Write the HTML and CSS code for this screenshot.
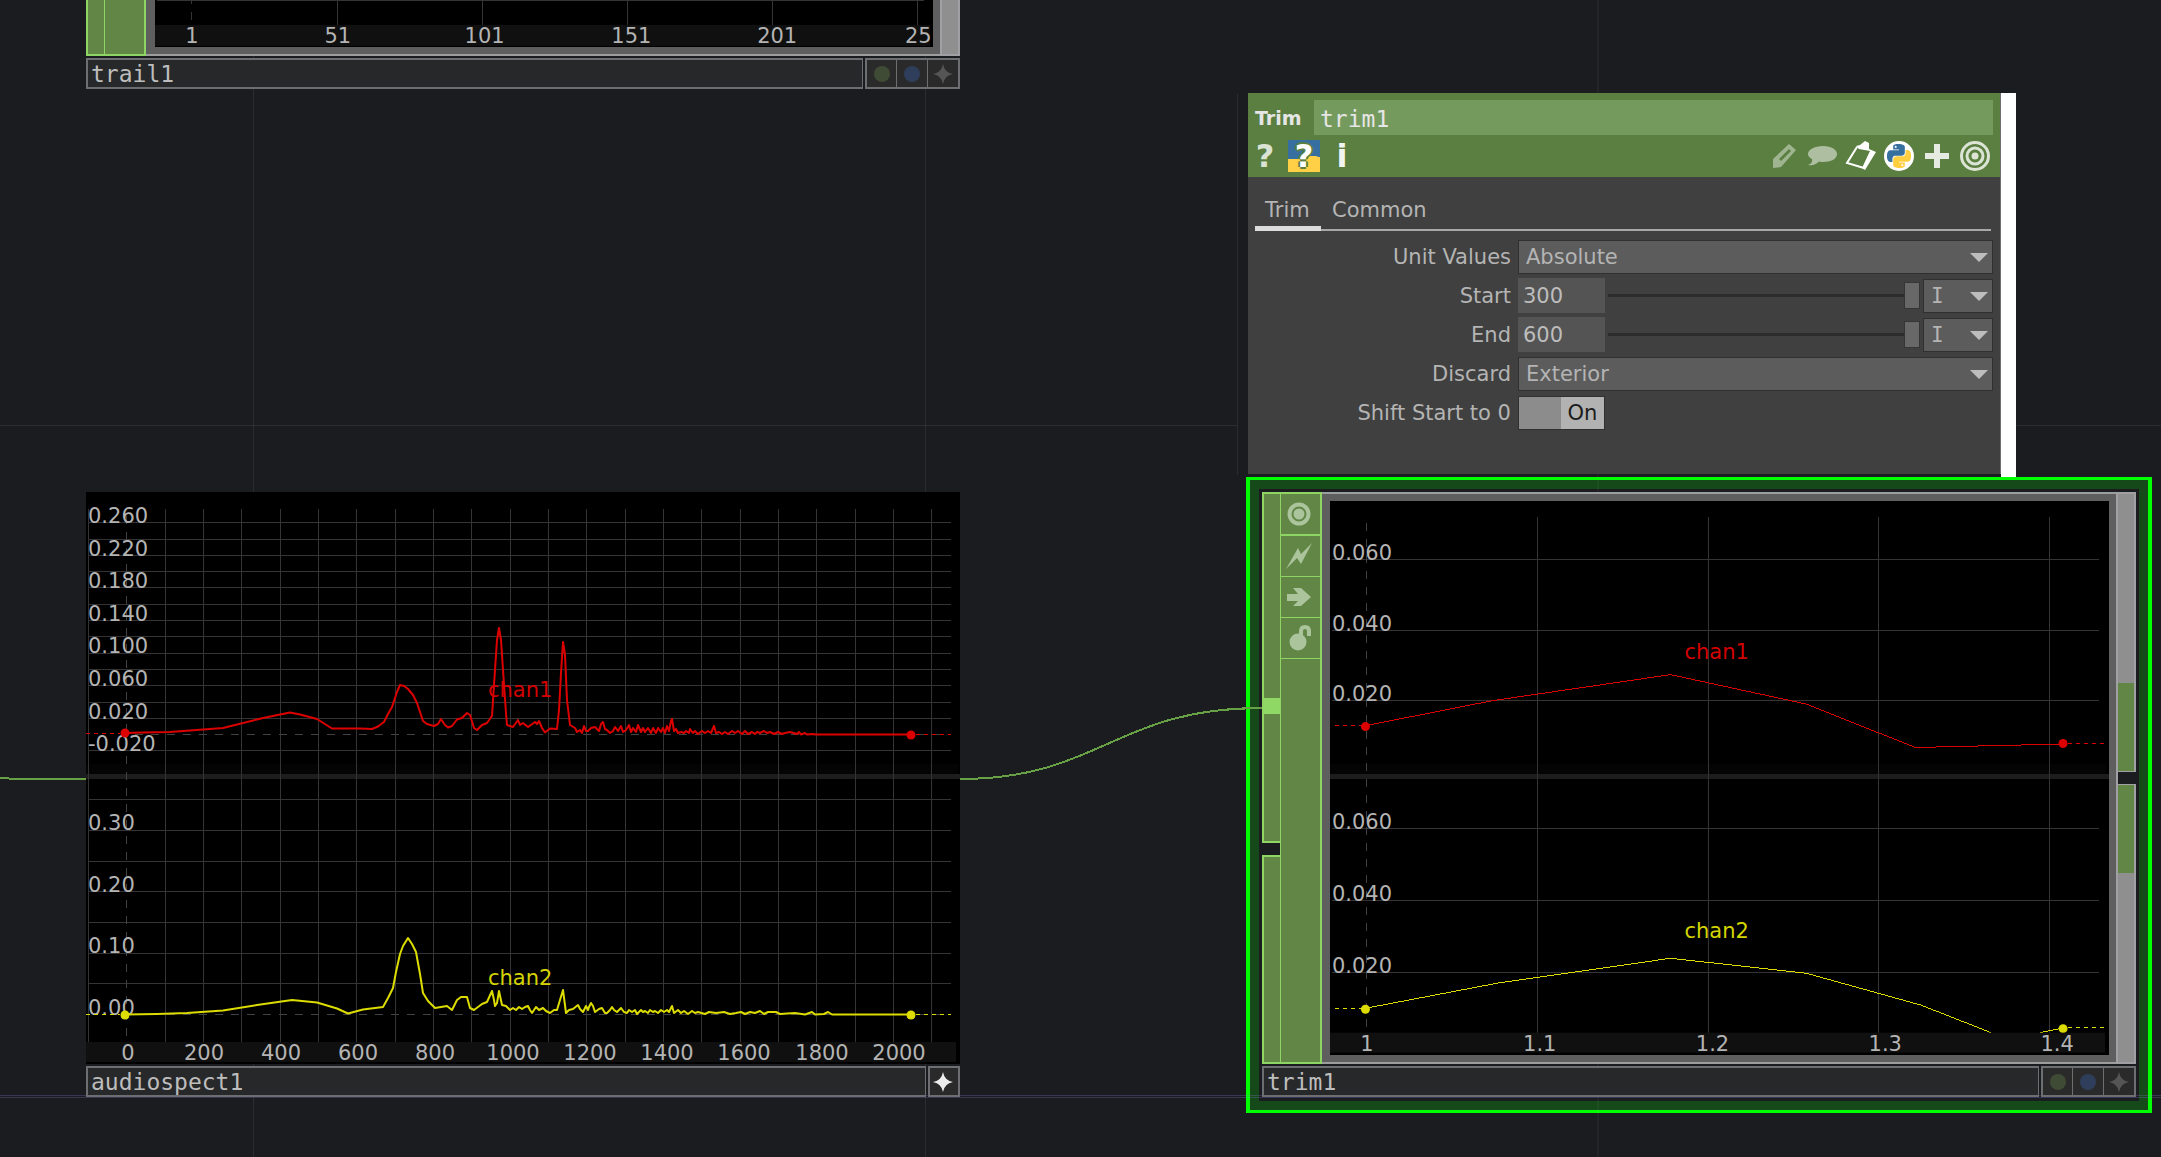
FILE: index.html
```html
<!DOCTYPE html>
<html lang="en">
<head>
<meta charset="utf-8">
<title>Network Editor</title>
<link rel="stylesheet" href="styles.css">
</head>
<body>
<svg class="defs" aria-hidden="true">
  <defs>
    <symbol id="star" viewBox="0 0 20 20"><path d="M10 0Q11.500 8.500 20 10Q11.500 11.500 10 20Q8.500 11.500 0 10Q8.500 8.500 10 0z"/></symbol>
    <symbol id="snake" viewBox="0 0 24 24"><path d="M14.25.18l.9.2.73.26.59.3.45.32.34.34.25.34.16.33.1.3.04.26.02.2-.01.13V8.500l-.05.63-.13.55-.21.46-.26.38-.3.31-.33.25-.35.19-.35.14-.33.1-.3.07-.26.04-.21.02H8.770l-.69.05-.59.14-.5.22-.41.27-.33.32-.27.35-.2.36-.15.37-.1.35-.07.32-.04.27-.02.21v3.060H3.170l-.21-.03-.28-.07-.32-.12-.35-.18-.36-.26-.36-.36-.35-.46-.32-.59-.28-.73-.21-.88-.14-1.050-.05-1.230.06-1.220.16-1.040.24-.87.32-.71.36-.57.4-.44.42-.33.42-.24.4-.16.36-.1.32-.05.24-.01h.16l.06.01h8.160v-.83H6.180l-.01-2.750-.02-.37.05-.34.11-.31.17-.28.25-.26.31-.23.38-.2.44-.18.51-.15.58-.12.64-.1.71-.06.77-.04.84-.02 1.270.05zm-6.300 1.980l-.23.33-.08.41.08.41.23.34.33.22.41.09.41-.09.33-.22.23-.34.08-.41-.08-.41-.23-.33-.33-.22-.41-.09-.41.09z"/></symbol>
  </defs>
</svg>

<main class="network">
  <div class="selection"></div>

  <svg class="wires" width="2161" height="1157" viewBox="0 0 2161 1157" aria-hidden="true">
    <g class="lattice">
      <path d="M253.500 0V1157M925.500 0V1157M1598 0V1157M1237.500 94V475M0 425.500H1237M2016 425.500H2161"/>
      <path class="axis" d="M0 1095.500H2161M0 1097.500H2161"/>
    </g>
    <path class="wire" d="M0 778Q20 779.500 60 779H86"/>
    <path class="wire" d="M960 779C1100 779 1115 708 1262 708"/>
  </svg>

  <section class="node node-trail" aria-label="trail1">
    <div class="tile framed">
      <div class="inputs"><span class="slot"></span></div>
      <div class="switches"></div>
      <svg class="chart" viewBox="154 0 779 47">
        <rect class="strip" x="154" y="25" width="776" height="21"/>
        <path class="grid" d="M156 .5H924M336.500 0V25M481.500 0V25M627.500 0V25M772.500 0V25M917.500 0V25"/>
        <path class="grid" d="M190.500 0V4M190.500 12V20"/>
        <g class="mid"><text x="191" y="43">1</text><text x="337" y="43">51</text><text x="484" y="43">101</text><text x="631" y="43">151</text><text x="777" y="43">201</text></g>
        <text x="905" y="43">25</text>
      </svg>
      <div class="outputs"><span class="out"></span></div>
    </div>
    <div class="footer">
      <div class="name">trail1</div>
      <div class="flags">
        <button class="flag" aria-label="Display"><i class="dot render"></i></button>
        <button class="flag" aria-label="Render"><i class="dot display"></i></button>
        <button class="flag" aria-label="Viewer active"><svg class="spark"><use href="#star"/></svg></button>
      </div>
    </div>
  </section>

  <section class="node node-spect" aria-label="audiospect1">
    <div class="tile">
      <svg class="chart" viewBox="86 492 874 572">
        <rect class="shade" x="86" y="764" width="872" height="10"/>
        <rect class="divider" x="86" y="774" width="874" height="5"/>
        <rect class="strip" x="86" y="1042" width="870" height="20"/>
        <path class="grid" d="M88.500 509V1042M165.500 509V1042M203.500 509V1042M241.500 509V1042M280.500 509V1042M318.500 509V1042M356.500 509V1042M395.500 509V1042M433.500 509V1042M471.500 509V1042M510.500 509V1042M548.500 509V1042M586.500 509V1042M625.500 509V1042M663.500 509V1042M701.500 509V1042M740.500 509V1042M778.500 509V1042M816.500 509V1042M855.500 509V1042M893.500 509V1042M931.500 509V1042"/>
        <path class="grid" d="M88 522.500H951M88 539.500H951M88 555.500H951M88 571.500H951M88 587.500H951M88 604.500H951M88 620.500H951M88 636.500H951M88 653.500H951M88 669.500H951M88 685.500H951M88 702.500H951M88 718.500H951M88 750.500H951M88 799.500H951M88 830.500H951M88 861.500H951M88 891.500H951M88 922.500H951M88 953.500H951M88 983.500H951"/>
        <path class="grid dashed" d="M126.500 516V1036M135 734.500H951M135 1014.500H951"/>
        <text x="88" y="523">0.260</text><text x="88" y="556">0.220</text><text x="88" y="588">0.180</text><text x="88" y="621">0.140</text><text x="88" y="653">0.100</text><text x="88" y="686">0.060</text><text x="88" y="719">0.020</text><text x="88" y="751">-0.020</text>
        <text x="88" y="830">0.30</text><text x="88" y="892">0.20</text><text x="88" y="953">0.10</text><text x="88" y="1015">0.00</text>
        <g class="mid"><text x="128" y="1060">0</text><text x="204" y="1060">200</text><text x="281" y="1060">400</text><text x="358" y="1060">600</text><text x="435" y="1060">800</text><text x="513" y="1060">1000</text><text x="590" y="1060">1200</text><text x="667" y="1060">1400</text><text x="744" y="1060">1600</text><text x="822" y="1060">1800</text><text x="899" y="1060">2000</text></g>
        <g class="red">
          <polyline class="line thick" points="125,733 143,732.500 170,732 223,728 263,718 290,712.500 300,714.500 317,719 332,728.500 360,728.500 372,729 378,726.500 384,722 388,714 392,707 397,692 400,685 404,686 408,689 413,695 417,703 423,721 427,724 434,726 438,724 441,719 445,725 448,727.500 452,726 457,719.500 462,718 467,713 470,715 474,728 477,730 482,725 487,723 492,716 495,670 497,640 499,628 501,640 503,670 506,713 507,725 513,727 518,720 520,725 523,723 528,727 535,722 537,724 539,721 542,728 545,732.500 550,728.500 557,729 559,710 561,673 563,642 565,655 567,700 570,725 575,728 577,732 580,730 582,733 584,726 586,731 588,731 591,728 595,727 599,731 601,724 603,722 605,729 607,730 610,733 613,731 615,727 618,731 621,726 623,732 626,730 629,725 631,732 633,728 636,732 638,725 641,732 643,728 645,732 648,728 651,733 653,728 656,733 658,728 661,732 663,728 665,733 667,726 669,731 671,721 672,719 674,731 676,729 678,733 681,732 684,733 686,731 689,733 690,729 693,733 695,731 698,734 702,731 705,733 708,731 711,733 714,726 716,733 719,732 722,734 725,732 728,734 732,731 735,733 738,731 742,734 745,731 748,734 752,732 755,734 757,732 760,733 764,731 767,733 770,732 774,734 778,732 782,734 785,733 790,732 797,734 799,732 801,734.500 805,733 807,734.500 812,734 816,734.500 911,734.500"/>
          <path class="line dash" d="M86 733.500H120M916 734.500H951"/>
          <circle cx="125" cy="733" r="4.500"/><circle cx="911" cy="735" r="4.500"/>
          <text x="488" y="697">chan1</text>
        </g>
        <g class="yellow">
          <polyline class="line thick" points="125,1014.500 157,1014 187,1013 223,1010.500 257,1005 292,1000 317,1002.500 337,1008.500 348,1013.500 363,1009.500 383,1007 388,998 393,988 396,972 400,954 403,946 408,938 412,944 416,952 420,974 423,993 428,1001 435,1008 441,1007 447,1006 452,1010 457,1000 461,997 467,997 470,1008 474,1010 482,1004 487,1002 492,991 494,1000 495,1006 497,1003 499,991 502,1005 506,1006 510,1010 513,1008 516,1010 519,1007 522,1009 525,1007 528,1006 530,1010 532,1013 536,1007 539,1010 543,1008 546,1011 550,1013 554,1010 557,1010 560,1000 563,990 566,1013 569,1010 573,1009 578,1005 580,1009 583,1012 586,1006 588,1010 589,1007 591,1003 593,1006 595,1012 599,1009 602,1008 605,1013 607,1013 610,1010 612,1007 614,1010 617,1012 621,1008 624,1012 627,1013 629,1010 632,1012 635,1010 637,1014 641,1010 643,1012 645,1011 648,1013 650,1010 653,1012 655,1011 658,1013 661,1010 664,1012 667,1010 669,1012 672,1006 674,1013 678,1010 681,1013 684,1011 688,1014 692,1011 695,1013 698,1012 705,1014 709,1012 716,1013 724,1012 730,1014 736,1013 741,1012 745,1014 750,1012 755,1013 760,1011 764,1014 768,1012 776,1012 780,1014 795,1013 805,1014.500 812,1012 815,1014.500 824,1014 828,1012 832,1014.500 911,1014.500"/>
          <path class="line dash" d="M86 1014.500H120M916 1014.500H951"/>
          <circle cx="125" cy="1015" r="4.500"/><circle cx="911" cy="1015" r="4.500"/>
          <text x="488" y="985">chan2</text>
        </g>
      </svg>
    </div>
    <div class="footer">
      <div class="name">audiospect1</div>
      <div class="flags">
        <button class="flag on" aria-label="Viewer active"><svg class="spark"><use href="#star"/></svg></button>
      </div>
    </div>
  </section>

  <section class="node node-trim" aria-label="trim1">
    <div class="tile framed">
      <div class="inputs"><span class="slot first"><b class="plug"></b></span><span class="slot"></span></div>
      <div class="switches">
        <button class="switch" aria-label="Viewer"><svg viewBox="0 0 26 26"><circle cx="13" cy="13" r="9.500" fill="none" stroke-width="4"/><circle cx="13" cy="13" r="5.500" stroke="none"/></svg></button>
        <button class="switch" aria-label="Cook"><svg viewBox="0 0 26 26"><path stroke="none" d="M0 26L12 5L15 11L26 0L15 21L11 15z"/></svg></button>
        <button class="switch" aria-label="Bypass"><svg viewBox="0 0 26 26"><path stroke="none" d="M1 10H12L7 4H15L25 13L15 22H7L12 17H1z"/></svg></button>
        <button class="switch" aria-label="Lock"><svg viewBox="0 0 26 26"><circle cx="12" cy="17" r="8.500" stroke="none"/><path fill="none" stroke-width="4" d="M15 10V6Q15 2 19 2Q23 2 23 6V11"/></svg></button>
      </div>
      <svg class="chart" viewBox="1330 501 780 554">
        <rect class="shade" x="1330" y="764" width="777" height="10"/>
        <rect class="divider" x="1330" y="774" width="780" height="5"/>
        <path class="grid" d="M1537.500 517V1033M1708.500 517V1033M1879.500 517V1033M2050.500 517V1033M1332 559.500H2100M1332 630.500H2100M1332 700.500H2100M1332 828.500H2100M1332 900.500H2100M1332 972.500H2100"/>
        <path class="grid dashed" d="M1366.500 523V1028"/>
        <text x="1332" y="560">0.060</text><text x="1332" y="631">0.040</text><text x="1332" y="701">0.020</text>
        <text x="1332" y="829">0.060</text><text x="1332" y="901">0.040</text><text x="1332" y="973">0.020</text>
        <g class="red">
          <polyline class="line" points="1366,725.500 1493,700.500 1671,674.500 1807,704 1915,747 1935,747 2063,744"/>
          <path class="line dash" d="M1335 725.500H1362M2069 743.500H2105"/>
          <circle cx="1365.500" cy="726.500" r="4.500"/><circle cx="2064" cy="743.500" r="4.500"/>
          <text x="1685" y="659">chan1</text>
        </g>
        <g class="yellow">
          <polyline class="line" points="1366,1008.500 1497,983.500 1671,958.500 1807,973.500 1922,1005.500 1992,1033"/>
          <path class="line" d="M2041 1033L2063 1028.500"/>
          <path class="line dash" d="M1335 1008.500H1362M2069 1027.500H2105"/>
          <circle cx="1365.500" cy="1009.500" r="4.500"/><circle cx="2064" cy="1029" r="4.500"/>
          <text x="1685" y="938">chan2</text>
        </g>
        <rect class="strip" x="1330" y="1033" width="776" height="20"/>
        <g class="mid"><text x="1367" y="1051">1</text><text x="1540" y="1051">1.1</text><text x="1713" y="1051">1.2</text><text x="1886" y="1051">1.3</text><text x="2058" y="1051">1.4</text></g>
      </svg>
      <div class="outputs"><span class="out upper"></span><span class="out lower"></span></div>
    </div>
    <div class="footer">
      <div class="name">trim1</div>
      <div class="flags">
        <button class="flag" aria-label="Display"><i class="dot render"></i></button>
        <button class="flag" aria-label="Render"><i class="dot display"></i></button>
        <button class="flag" aria-label="Viewer active"><svg class="spark"><use href="#star"/></svg></button>
      </div>
    </div>
  </section>

  <form class="params">
    <div class="sheet">
      <header class="head">
        <div class="title">
          <label for="opname">Trim</label>
          <input id="opname" class="opname" type="text" value="trim1">
        </div>
        <div class="tools">
          <button type="button" class="tool glyph faded">?</button>
          <button type="button" class="tool glyph pyhelp">?</button>
          <button type="button" class="tool glyph">i</button>
          <span class="spring"></span>
          <button type="button" class="tool" aria-label="Edit"><svg viewBox="0 0 32 32" opacity=".42"><path fill="#fff" fill-rule="evenodd" d="M4 28V19L20 4L27 10L12 27z M10 19L12 21L22 11L20 9z"/></svg></button>
          <button type="button" class="tool" aria-label="Comment"><svg viewBox="0 0 32 32" opacity=".5"><path fill="#fff" d="M16 6C25 6 30 10 30 14C30 19 24 22 16 22Q14 22 12 21.500Q8 26 1 25Q6 23 5 19Q1 17 1 14C1 10 7 6 16 6z"/></svg></button>
          <button type="button" class="tool" aria-label="Copy parameters"><svg viewBox="0 0 32 32"><path fill="none" stroke="#fff" stroke-width="2" d="M12 7L2 23L19 28L26 12"/><path fill="#fff" d="M11 6L15 5L20 1L24 3L24 9L31 12L20 30L17 28L25 11L14 9z"/></svg></button>
          <button type="button" class="tool" aria-label="Python"><svg viewBox="0 0 32 32"><circle cx="16" cy="16" r="15" fill="#fff"/><use href="#snake" x="4" y="4" width="24" height="24" fill="#376f9f"/><use href="#snake" x="4" y="4" width="24" height="24" fill="#ffcf40" transform="rotate(180 16 16)"/></svg></button>
          <button type="button" class="tool" aria-label="Add"><svg viewBox="0 0 32 32"><path fill="#e6ebe2" d="M13 4H19V13H28V19H19V28H13V19H4V13H13z"/></svg></button>
          <button type="button" class="tool" aria-label="Target"><svg viewBox="0 0 32 32" stroke="#dce4d6" stroke-width="3" fill="none"><circle cx="16" cy="16" r="13.500"/><circle cx="16" cy="16" r="8"/><circle cx="16" cy="16" r="3.500" fill="#dce4d6" stroke="none"/></svg></button>
        </div>
      </header>
      <nav class="tabs">
        <a class="tab active" href="#trim">Trim</a>
        <a class="tab" href="#common">Common</a>
      </nav>
      <div class="fields">
        <div class="row"><label for="unit">Unit Values</label><div class="drop"><select id="unit"><option>Absolute</option></select></div></div>
        <div class="row"><label for="start">Start</label><input class="num" id="start" type="text" value="300"><input class="slide" type="range" aria-label="Start slider" value="100"><div class="drop unit"><select aria-label="Start unit"><option>I</option></select></div></div>
        <div class="row"><label for="end">End</label><input class="num" id="end" type="text" value="600"><input class="slide" type="range" aria-label="End slider" value="100"><div class="drop unit"><select aria-label="End unit"><option>I</option></select></div></div>
        <div class="row"><label for="discard">Discard</label><div class="drop"><select id="discard"><option>Exterior</option></select></div></div>
        <div class="row"><label for="shift">Shift Start to 0</label><button type="button" class="toggle" id="shift" aria-pressed="true"><span>On</span></button></div>
      </div>
    </div>
    <div class="edge"></div>
  </form>
</main>
</body>
</html>
```
FILE: styles.css
```css
* { box-sizing: border-box; }

body {
  margin: 0;
  background: #1b1c20;
  color: #b4b4b4;
  font: 21px/24px "DejaVu Sans", Verdana, sans-serif;
}

button, input, select {
  margin: 0;
  padding: 0;
  border: 0;
  border-radius: 0;
  background: none;
  color: inherit;
  font: inherit;
}

.defs { position: absolute; width: 0; height: 0; }

.network {
  position: relative;
  min-height: 100vh;
  overflow: hidden;
}

/* canvas background, wires */
.wires { position: absolute; left: 0; top: 0; }
.lattice path { fill: none; stroke: #fff; stroke-opacity: .07; }
.lattice .axis { stroke: #8a80e0; stroke-opacity: .25; }
.wire { fill: none; stroke: #68a046; stroke-width: 2; shape-rendering: crispEdges; }

.selection {
  position: absolute;
  left: 1246px;
  top: 477px;
  width: 906px;
  height: 636px;
  border: solid #0f0;
  border-width: 3px 4px;
  background: #1b1c20;
  box-shadow: inset 0 0 0 9px #16491a;
}

/* nodes */
.node {
  position: absolute;
  display: flex;
  flex-direction: column;
  gap: 2px;
  width: 874px;
}
.node-trail { left: 86px; top: 0; }
.node-spect { left: 86px; top: 492px; }
.node-trim { left: 1262px; top: 492px; }

.tile { display: flex; height: 572px; background: #000; }
.node-trail .tile { height: 56px; }
.tile.framed { background: #1b1c20; }

.inputs { display: flex; flex-direction: column; gap: 12px; width: 18px; }
.slot {
  flex: 1;
  border: 2px solid #8fd564;
  border-right: 0;
  background: #618645;
}
.slot.first { flex: 0 0 351px; padding-top: 204px; }
.plug { display: block; height: 16px; background: #90d866; }
.node-trail .slot, .node-trail .switches, .node-trail .chart, .node-trail .out { border-top: 0; }

.switches {
  width: 42px;
  border: 2px solid #8fd564;
  border-left-width: 1px;
  background: #618645;
}
.switch {
  display: flex;
  align-items: center;
  justify-content: center;
  width: 100%;
  height: 42px;
  padding-right: 3px;
  border-bottom: 1px solid #8fd564;
}
.switch:first-child { border-bottom-width: 2px; }
.switch + .switch { height: 41px; }
.switch svg { width: 26px; height: 26px; fill: #abc49c; stroke: #abc49c; }

.framed .chart {
  border: solid #5e5e5e;
  border-width: 7px 7px 7px 8px;
  box-shadow: 0 -2px 0 #9c9d9e, 0 2px 0 #9c9d9e;
  margin: 2px 0;
}
.node-trail .chart { margin-top: 0; border-width: 0 7px 7px 9px; }

.outputs { display: flex; flex-direction: column; gap: 12px; width: 20px; background: #1b1c20; box-shadow: inset 2px 0 0 #a0a0a4; }
.out {
  flex: 1;
  border: 2px solid #a0a0a4;
  background: #8f8f8f;
}
.out.upper { border-bottom-width: 1px; background: linear-gradient(#8f8f8f 189px, #618645 189px); }
.out.lower { border-top-width: 1px; background: linear-gradient(#618645 88px, #8f8f8f 88px); }

.footer { display: flex; gap: 2px; height: 31px; }
.name {
  flex: 1;
  padding-left: 3px;
  border: 2px solid #6d6e71;
  border-width: 2px 1px 2px 2px;
  background: #27282a;
  color: #bdbdbd;
  font: 23px/29px "DejaVu Sans Mono", monospace;
}
.flags { display: flex; border: 2px solid #6d6e71; background: #2a2a2a; }
.flag {
  display: flex;
  align-items: center;
  justify-content: center;
  width: 29px;
}
.flag + .flag { width: 31px; border-left: 1px solid #6d6e71; }
.flag:only-child { width: 28px; padding-right: 2px; }
.dot { width: 16px; height: 16px; border-radius: 50%; }
.render { background: #404b35; }
.display { background: #2e3e5b; }
.spark { width: 20px; height: 20px; fill: #555; }
.on .spark { fill: #ececec; }

/* charts */
.chart { display: block; flex: 1; min-width: 0; height: auto; background: #000; }
.chart text { fill: #b4b4b4; }
.mid text { text-anchor: middle; }
.grid { fill: none; stroke: #343434; shape-rendering: crispEdges; }
.dashed { stroke: #424242; stroke-dasharray: 8 8; }
.shade { fill: #040404; }
.divider { fill: #1d1d1d; }
.strip { fill: #101010; }
.line { fill: none; shape-rendering: crispEdges; }
.thick { stroke-width: 2; stroke-linejoin: round; shape-rendering: auto; }
.dash { stroke-dasharray: 4 4; }
.red { stroke: #dc0000; fill: #dc0000; }
.yellow { stroke: #dcdc00; fill: #dcdc00; }
.red text, .red circle, .yellow text, .yellow circle { stroke: none; }
.chart .red text { fill: #d40000; }
.chart .yellow text { fill: #d4d400; }

/* parameter window */
.params {
  position: absolute;
  left: 1248px;
  top: 93px;
  display: flex;
  width: 768px;
  height: 384px;
}
.sheet { flex: 1; margin-bottom: 3px; border-right: 1px solid #6f6f6f; background: #404040; }
.edge { width: 15px; background: #fff; }

.head { padding: 7px 7px 5px; background: #5a7f40; }
.title { display: flex; align-items: center; height: 35px; }
.title label {
  width: 59px;
  color: #e6e6e6;
  font-size: 19px;
  font-weight: bold;
}
.opname {
  flex: 1;
  height: 35px;
  padding: 2px 0 0 6px;
  background: #759a5e;
  color: #e6e6e6;
  font: 23px/33px "DejaVu Sans Mono", monospace;
}
.tools { display: flex; gap: 6px; height: 37px; padding: 5px 2px 0 0; }
.tool { width: 32px; height: 32px; }
.tool svg { display: block; width: 32px; height: 32px; }
.tool.glyph { color: #f2f5f0; font-size: 32px; font-weight: bold; line-height: 32px; }
.tool.faded { width: 20px; margin-right: 7px; color: #dbe4d4; }
.tool.pyhelp {
  background: radial-gradient(ellipse 26px 16px at 24px 32px, #ffcf45 98%, transparent), linear-gradient(#376fa0 60%, #ffcf45 60%);
  color: #fff;
  text-shadow: 2px 0 #5a7f40, -2px 0 #5a7f40, 0 2px #5a7f40, 0 -2px #5a7f40;
}
.spring { flex: 1; }

.tabs {
  display: flex;
  height: 54px;
  margin: 0 9px 0 7px;
  padding-top: 20px;
  border-bottom: 2px solid #a8a8a8;
}
.tab { height: 34px; padding: 0 11px; border-bottom: 5px solid transparent; line-height: 27px; color: #b4b4b4; text-decoration: none; }
.tab.active { width: 66px; padding: 0 10px; border-color: #dcdcdc; }

.fields { display: flex; flex-direction: column; gap: 4px; padding: 8px 7px 0; }
.row { display: flex; align-items: center; height: 35px; }
.row > label { width: 256px; margin-right: 7px; text-align: right; }
.drop { position: relative; flex: 1; }
.drop select {
  display: block;
  appearance: none;
  width: 100%;
  height: 34px;
  padding-left: 7px;
  border: 1px solid #303030;
  background: #5c5c5c;
}
.drop::after {
  content: "";
  position: absolute;
  right: 5px;
  top: 13px;
  border: solid transparent;
  border-width: 9px 9px 0;
  border-top-color: #bdbdbd;
}
.unit { flex: 0 0 70px; }
.unit select { font-family: "DejaVu Sans Mono", monospace; }
.num { width: 87px; height: 35px; padding-left: 5px; background: #545454; color: #bdbdbd; }
.slide { appearance: none; flex: 1; min-width: 0; height: 28px; margin: 0 3px; }
.slide::-webkit-slider-runnable-track { height: 3px; background: #2c2c2c; }
.slide::-webkit-slider-thumb {
  appearance: none;
  width: 16px;
  height: 27px;
  margin-top: -12px;
  border: 1px solid #353535;
  background: #686868;
}
.toggle {
  display: flex;
  justify-content: flex-end;
  width: 87px;
  height: 34px;
  border: 1px solid #303030;
  background: #8c8c8c;
  color: #1c1c1c;
}
.toggle span { width: 43px; background: #b2b2b2; line-height: 32px; }
```
